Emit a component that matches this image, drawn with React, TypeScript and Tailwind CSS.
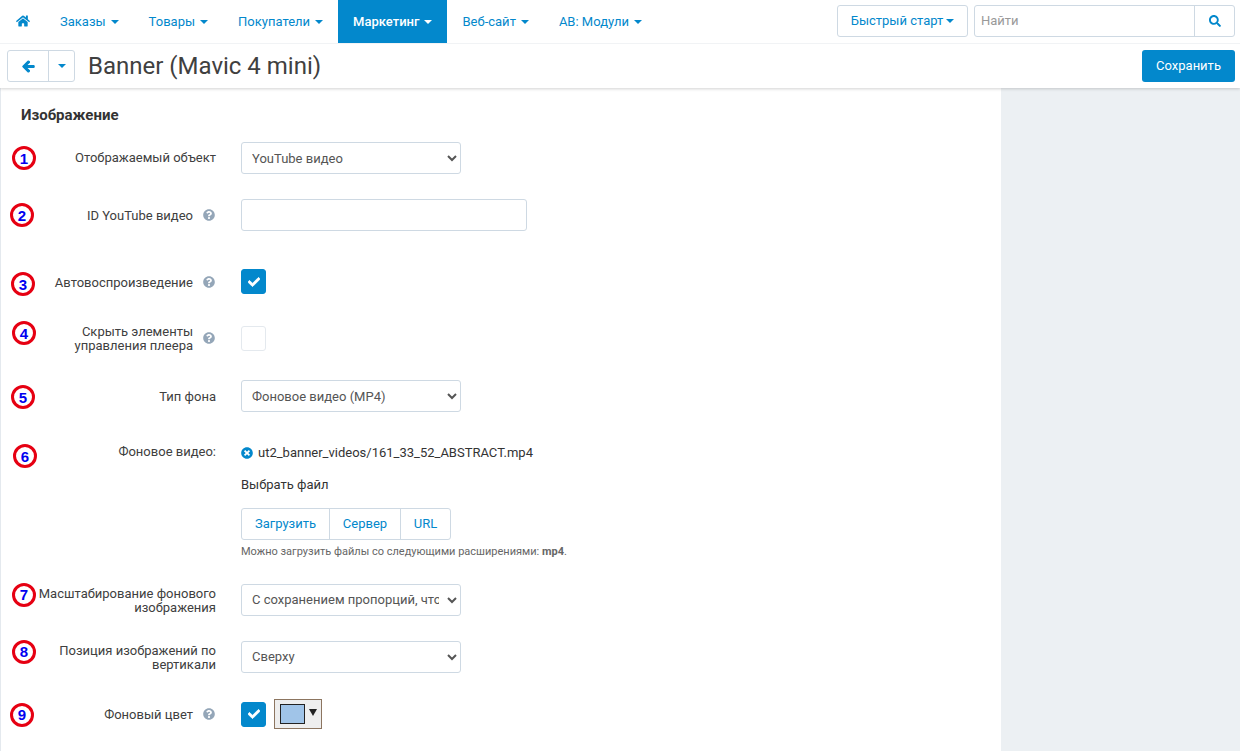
import { ReactNode } from "react";
import { FaArrowLeft, FaCheck, FaHome, FaQuestionCircle, FaSearch, FaTimesCircle } from "react-icons/fa";

const navItems = ["Заказы", "Товары", "Покупатели", "Маркетинг", "Веб-сайт", "AB: Модули"];

function Caret({ className = "border-t-[#0388cc]" }: { className?: string }) {
  return <span className={`inline-block w-0 h-0 border-x-[4px] border-x-transparent border-t-[4px] ${className}`} />;
}

function Marker({ n, className }: { n: number; className: string }) {
  return (
    <span className={`absolute w-[24px] h-[24px] rounded-full border-[3px] border-[#e60012] bg-white flex items-center justify-center text-[15px] leading-none font-bold text-[#0000f0] font-['Liberation_Sans',sans-serif] ${className}`}>
      {n}
    </span>
  );
}

function Help() {
  return <FaQuestionCircle className="text-[#94a6b8] text-[12px] shrink-0 ml-[10px] mr-px" />;
}

function Row({ n, marker, label, help, low, className, children, top }: {
  n: number;
  marker: string;
  label: ReactNode;
  help?: boolean;
  low?: boolean;
  className: string;
  children: ReactNode;
  top?: boolean;
}) {
  return (
    <div className={`relative flex ${top ? "items-start" : "items-center"} ${className}`}>
      <Marker n={n} className={marker} />
      <div className="w-[240px] shrink-0 pr-[25px] flex items-center justify-end text-right leading-[14px]">
        <div className={help || low ? "mt-[2px]" : ""}>{label}</div>
        {help && <Help />}
      </div>
      {children}
    </div>
  );
}

function Select({ value, options }: { value: string; options?: string[] }) {
  return (
    <select
      defaultValue={value}
      className="w-[220px] h-[32px] border border-[#ced9e3] rounded-[3px] bg-white pl-[6px] pr-[5px] text-[13px] text-[#555] outline-none font-['Roboto',sans-serif]"
    >
      {(options ?? [value]).map((o) => <option key={o}>{o}</option>)}
    </select>
  );
}

function Check({ checked }: { checked?: boolean }) {
  return (
    <span className={`w-[25px] h-[25px] rounded-[3px] flex items-center justify-center border ${checked ? "bg-[#0388cc] border-[#0388cc]" : "bg-white border-[#e4e9ee]"}`}>
      {checked && <FaCheck className="text-white text-[12px] stroke-[30px]" />}
    </span>
  );
}

export default function App() {
  return (
    <div className="h-[751px] overflow-hidden bg-[#ecf0f3] font-['Roboto',sans-serif] text-[13px] text-[#404040] relative">
      <header className="relative z-10 bg-white shadow-[0_1px_3px_rgba(0,0,0,0.18)]">
        <nav className="h-[44px] flex items-stretch border-b border-[#f1f3f5] pl-px pr-[5px]">
          <a className="flex items-center px-[15px] text-[#0388cc]"><FaHome className="text-[14px] -mt-[2px]" /></a>
          {navItems.map((item) => (
            <a
              key={item}
              className={`flex items-center gap-[5px] px-[15px] ${item === "Маркетинг" ? "bg-[#0388cc] text-white font-medium" : "text-[#0388cc]"}`}
            >
              {item}
              <Caret className={item === "Маркетинг" ? "border-t-white" : "border-t-[#0388cc]"} />
            </a>
          ))}
          <div className="ml-auto flex items-start pt-[5px] gap-[6px]">
            <button className="w-[131px] h-[32px] border border-[#ced9e3] rounded-[3px] flex items-center justify-center gap-[3px] text-[#0388cc]">
              Быстрый старт
              <Caret />
            </button>
            <div className="w-[261px] h-[32px] border border-[#ced9e3] rounded-[3px] flex items-stretch">
              <input placeholder="Найти" className="flex-1 min-w-0 px-[6px] outline-none text-[13px] placeholder:text-[#999]" />
              <button className="w-[40px] border-l border-[#ced9e3] flex items-center justify-center text-[#0388cc]">
                <FaSearch className="text-[12px]" />
              </button>
            </div>
          </div>
        </nav>
        <div className="h-[44px] flex items-center pl-[7px] pr-[5px]">
          <div className="h-[32px] w-[68px] border border-[#ced9e3] rounded-[3px] flex items-stretch text-[#0388cc]">
            <span className="w-[40px] flex items-center justify-center"><FaArrowLeft className="text-[13px] stroke-[40px]" /></span>
            <span className="flex-1 border-l border-[#ced9e3] flex items-center justify-center"><Caret /></span>
          </div>
          <h1 className="ml-[13px] text-[24px] leading-none text-[#404040]">Banner (Mavic 4 mini)</h1>
          <button className="ml-auto w-[93px] h-[32px] rounded-[3px] bg-[#0388cc] text-white text-[13px]">Сохранить</button>
        </div>
      </header>

      <div className="flex h-[663px]">
        <main className="w-[1001px] bg-white border-l border-[#e4e9ee]">
          <h2 className="ml-[20px] mt-[18px] text-[15px] leading-[18px] font-bold text-[#333]">Изображение</h2>

          <Row n={1} marker="left-[11px] top-[4px]" label="Отображаемый объект" className="mt-[18px]">
            <Select value="YouTube видео" />
          </Row>
          <Row n={2} marker="left-[9px] top-[4px]" label="ID YouTube видео" help className="mt-[25px]">
            <input className="w-[286px] h-[32px] border border-[#ced9e3] rounded-[3px] outline-none" />
          </Row>
          <Row n={3} marker="left-[10px] top-[3px]" label="Автовоспроизведение" help className="mt-[38px]">
            <Check checked />
          </Row>
          <Row n={4} marker="left-[11px] top-[-2px]" label={<>Скрыть элементы<br />управления плеера</>} help className="mt-[29px]">
            <Check />
          </Row>
          <Row n={5} marker="left-[10px] top-[5px]" label="Тип фона" low className="mt-[27px]">
            <Select value="Фоновое видео (MP4)" />
          </Row>

          <Row n={6} marker="left-[12px] top-[-1px]" label="Фоновое видео:" className="mt-[33px]" top>
            <div>
              <div className="flex items-center h-[16px] gap-[5px] text-[#333] mt-[-0.5px]">
                <FaTimesCircle className="text-[#0388cc] text-[12px]" />
                ut2_banner_videos/161_33_52_ABSTRACT.mp4
              </div>
              <div className="mt-[16px] h-[16px] leading-[16px] text-[#333]">Выбрать файл</div>
              <div className="mt-[15px] flex w-[210px] h-[32px] border border-[#ced9e3] rounded-[3px] text-[#0388cc]">
                <span className="w-[87px] flex items-center justify-center">Загрузить</span>
                <span className="w-[71px] border-l border-[#ced9e3] flex items-center justify-center">Сервер</span>
                <span className="flex-1 border-l border-[#ced9e3] flex items-center justify-center">URL</span>
              </div>
              <p className="mt-[5px] text-[11px] leading-[14px] text-[#666]">
                Можно загрузить файлы со следующими расширениями: <b>mp4</b>.
              </p>
            </div>
          </Row>

          <Row n={7} marker="left-[11px] top-[-1px]" label={<>Масштабирование фонового<br />изображения</>} low className="mt-[25px]">
            <Select value="С сохранением пропорций, чтобы заполнить блок" />
          </Row>
          <Row n={8} marker="left-[11px] top-[-1px]" label={<>Позиция изображений по<br />вертикали</>} low className="mt-[25px]">
            <Select value="Сверху" />
          </Row>
          <Row n={9} marker="left-[9px] top-[3px]" label="Фоновый цвет" help className="mt-[27px]">
            <Check checked />
            <span className="ml-[8px] -mt-px w-[48px] h-[30px] border border-[#8c7560] bg-[#eeeeee] flex items-center pl-[5px] gap-[4px]">
              <span className="w-[25px] h-[20px] border border-[#222] bg-[#a0c4e8]" />
              <span className="w-0 h-0 border-x-[4px] border-x-transparent border-t-[7px] border-t-[#222] -mt-[3px]" />
            </span>
          </Row>
        </main>
        <aside className="flex-1" />
      </div>
    </div>
  );
}
